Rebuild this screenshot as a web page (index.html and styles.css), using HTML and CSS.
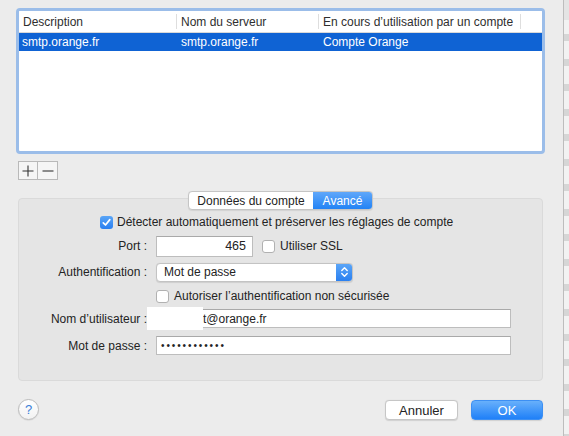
FILE: index.html
```html
<!DOCTYPE html>
<html lang="fr">
<head>
<meta charset="utf-8">
<title>Serveurs SMTP</title>
<link rel="stylesheet" href="styles.css">
</head>
<body>
<div class="window">
  <div class="main">
    <div class="table-ring">
      <div class="table">
        <div class="row head">
          <div class="cell c1">Description</div>
          <div class="cell c2">Nom du serveur</div>
          <div class="cell c3">En cours d’utilisation par un compte</div>
          <div class="cell c4"></div>
        </div>
        <div class="row selected">
          <div class="cell c1">smtp.orange.fr</div>
          <div class="cell c2">smtp.orange.fr</div>
          <div class="cell c3">Compte Orange</div>
          <div class="cell c4"></div>
        </div>
      </div>
    </div>

    <div class="addremove">
      <div class="ar-btn">
        <svg width="12" height="12" viewBox="0 0 12 12"><path d="M6 0.5V11.5M0.5 6H11.5" stroke="#333" stroke-width="1.1"/></svg>
      </div>
      <div class="ar-btn">
        <svg width="12" height="12" viewBox="0 0 12 12"><path d="M0.5 6H11.5" stroke="#333" stroke-width="1.1"/></svg>
      </div>
    </div>

    <div class="tabs">
      <div class="seg">
        <div class="seg-item">Données du compte</div>
        <div class="seg-item active">Avancé</div>
      </div>
    </div>

    <div class="group">
      <div class="auto-row">
        <span class="cb checked">
          <svg width="9" height="9" viewBox="0 0 9 9"><path d="M1.3 4.8L3.5 7L7.8 1.6" stroke="#fff" stroke-width="1.7" fill="none" stroke-linecap="round" stroke-linejoin="round"/></svg>
        </span>
        <span>Détecter automatiquement et préserver les réglages de compte</span>
      </div>

      <div class="form">
        <div class="label l-port">Port :</div>
        <div class="ctl ctl-port">
          <div class="input port">465</div>
          <span class="cb"></span>
          <span>Utiliser SSL</span>
        </div>

        <div class="label l-auth">Authentification :</div>
        <div class="ctl ctl-auth">
          <div class="popup">
            <span class="popup-text">Mot de passe</span>
            <span class="popup-arrow">
              <svg width="9" height="12" viewBox="0 0 9 12"><path d="M1.8 4.5L4.5 1.8L7.2 4.5M1.8 7.5L4.5 10.2L7.2 7.5" stroke="#fff" stroke-width="1.4" fill="none" stroke-linecap="round" stroke-linejoin="round"/></svg>
            </span>
          </div>
        </div>

        <div class="label"></div>
        <div class="ctl ctl-insecure">
          <span class="cb"></span>
          <span>Autoriser l’authentification non sécurisée</span>
        </div>

        <div class="label l-user">Nom d’utilisateur :</div>
        <div class="ctl ctl-user">
          <div class="input wide user"><span class="redact"></span>t@orange.fr</div>
        </div>

        <div class="label l-pass">Mot de passe :</div>
        <div class="ctl ctl-pass">
          <div class="input wide pass">••••••••••••</div>
        </div>
      </div>
    </div>

    <div class="footer">
      <div class="help">?</div>
      <div class="buttons">
        <div class="btn">Annuler</div>
        <div class="btn primary">OK</div>
      </div>
    </div>
  </div>
  <div class="side"></div>
</div>
</body>
</html>
```

FILE: styles.css
```css
html, body {
  margin: 0;
  padding: 0;
}
body {
  background: #ececec;
  font-family: "Liberation Sans", Arial, sans-serif;
  font-size: 12px;
  color: #232323;
}
.window {
  display: flex;
  width: 569px;
  height: 436px;
  overflow: hidden;
}
.main {
  width: 563px;
  flex: none;
  padding-top: 8px;
  box-sizing: border-box;
}
.side {
  flex: 1;
  border-left: 1px solid #bdbdbd;
  background:
    linear-gradient(#e4e4e4 0 20px, transparent 20px),
    repeating-linear-gradient(#f2f2f2 0 9px, #d6d6d6 9px 16px, #f2f2f2 16px 25px);
}

/* table */
.table-ring {
  margin-left: 16px;
  width: 529px;
  height: 146px;
  box-sizing: border-box;
  border: 3px solid #9bbde9;
  border-radius: 4px;
  background: #fff;
  overflow: hidden;
}
.table {
  background: #fff;
}
.row {
  display: flex;
}
.row.head {
  height: 21px;
  border-bottom: 1px solid #d9d9d9;
  color: #2e2e2e;
}
.cell {
  box-sizing: border-box;
  padding-left: 4px;
  display: flex;
  align-items: center;
  white-space: nowrap;
  overflow: hidden;
}
.head .cell {
  border-right: 1px solid #dedede;
  margin: 3px 0;
}
.head .c4 { border-right: none; }
.c1 { width: 158px; padding-left: 4px; }
.c2 { width: 142px; }
.c3 { width: 202px; }
.c4 { flex: 1; }
.row.selected {
  height: 18px;
  background: #0f63d4;
  color: #fff;
}
.selected .cell { padding-left: 4px; }
.selected .c1 { padding-left: 3px; }

/* + - */
.addremove {
  display: flex;
  margin: 7px 0 0 18px;
}
.ar-btn {
  width: 20px;
  height: 19px;
  box-sizing: border-box;
  border: 1px solid #b9b9b9;
  background: #f5f5f5;
  display: flex;
  align-items: center;
  justify-content: center;
}
.ar-btn + .ar-btn { border-left: none; }

/* segmented */
.tabs {
  display: flex;
  justify-content: center;
  margin-top: 11px;
  margin-left: -2px;
  margin-bottom: -12px;
  position: relative;
  z-index: 1;
}
.seg {
  display: flex;
  height: 17px;
  border: 1px solid #c5c5c5;
  border-radius: 4px;
  background: #fff;
  overflow: hidden;
  box-shadow: 0 0.5px 1px rgba(0,0,0,0.08);
}
.seg-item {
  display: flex;
  align-items: center;
  justify-content: center;
  color: #232323;
}
.seg-item:first-child { width: 124px; }
.seg-item.active {
  width: 59px;
  background: linear-gradient(#5fa7fa, #2383f5);
  color: #fff;
}

/* group */
.group {
  margin-left: 18px;
  width: 525px;
  height: 183px;
  box-sizing: border-box;
  border: 1px solid #dadada;
  border-radius: 4px;
  background: #e5e5e5;
  padding-top: 16px;
}
.auto-row {
  display: flex;
  align-items: center;
  gap: 4px;
  margin-left: 81px;
  height: 14px;
}
.cb {
  width: 13px;
  height: 13px;
  box-sizing: border-box;
  border: 1px solid #b1b1b1;
  border-radius: 3px;
  background: #fff;
  display: inline-flex;
  align-items: center;
  justify-content: center;
  flex: none;
}
.cb.checked {
  border: none;
  background: linear-gradient(#5aa5f7, #2a7ff0);
}
.form {
  display: grid;
  grid-template-columns: 128px 1fr;
  column-gap: 9px;
  margin-top: 6px;
}
.label {
  text-align: right;
  display: flex;
  align-items: center;
  justify-content: flex-end;
}
.ctl {
  display: flex;
  align-items: center;
}
.ctl-port { height: 22px; gap: 5px; }
.ctl-auth { height: 20px; margin-top: 5px; }
.l-auth { margin-top: 5px; }
.ctl-insecure { height: 14px; margin-top: 7px; gap: 5px; }
.ctl-user { height: 19px; margin-top: 6px; }
.l-user { margin-top: 6px; }
.ctl-pass { height: 19px; margin-top: 8px; }
.l-pass { margin-top: 8px; }

.input {
  box-sizing: border-box;
  background: #fff;
  border: 1px solid #bdbdbd;
  border-top-color: #a9a9a9;
  display: flex;
  align-items: center;
  padding: 0 4px;
}
.input.port {
  width: 97px;
  height: 21px;
  justify-content: flex-end;
  padding-right: 6px;
  font-size: 12.5px;
  margin-right: 4px;
}
.input.wide {
  width: 355px;
  height: 19px;
}
.input.user {
  position: relative;
  padding-left: 46px;
}
.redact {
  position: absolute;
  left: -10px;
  top: -3px;
  width: 56px;
  height: 23px;
  background: #fff;
}
.input.pass {
  font-size: 10px;
  letter-spacing: 1.9px;
  padding-left: 4px;
}
.popup {
  width: 197px;
  height: 19px;
  box-sizing: border-box;
  border: 1px solid #c3c3c3;
  border-radius: 4px;
  background: #fff;
  display: flex;
  overflow: hidden;
  box-shadow: 0 0.5px 1px rgba(0,0,0,0.1);
}
.popup-text {
  flex: 1;
  display: flex;
  align-items: center;
  padding-left: 7px;
}
.popup-arrow {
  width: 16px;
  background: linear-gradient(#5aa5f8, #2a80f0);
  display: flex;
  align-items: center;
  justify-content: center;
}

/* footer */
.footer {
  display: flex;
  align-items: center;
  justify-content: space-between;
  margin: 17px 20px 0 18px;
}
.help {
  width: 21px;
  height: 21px;
  box-sizing: border-box;
  border-radius: 50%;
  border: 1px solid #bcbcbc;
  background: linear-gradient(#ffffff, #f2f2f2);
  color: #3b7fd8;
  display: flex;
  align-items: center;
  justify-content: center;
  font-size: 13px;
  box-shadow: 0 0.5px 1px rgba(0,0,0,0.12);
}
.buttons {
  display: flex;
  gap: 13px;
  margin-top: 2px;
}
.btn {
  width: 73px;
  height: 20px;
  box-sizing: border-box;
  border: 1px solid #c6c6c6;
  border-radius: 4px;
  background: #fff;
  display: flex;
  align-items: center;
  justify-content: center;
  font-size: 13px;
  box-shadow: 0 0.5px 1px rgba(0,0,0,0.12);
}
.btn.primary {
  width: 72px;
  border-color: #3c8ff3;
  background: linear-gradient(#68b0fb, #1f80f8);
  color: #fff;
}
```
